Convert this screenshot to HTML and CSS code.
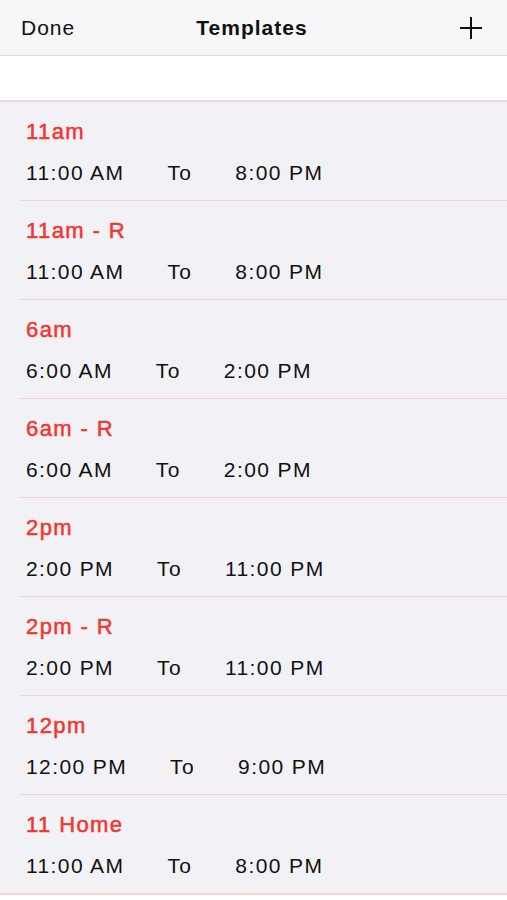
FILE: index.html
```html
<!DOCTYPE html>
<html lang="en">
<head>
  <meta charset="UTF-8" />
  <meta name="viewport" content="width=device-width, initial-scale=1.0" />
  <title>Templates</title>
  <link rel="stylesheet" href="styles.css">
</head>
<body>
  <header class="navbar">
    <span class="nav-left">Done</span>
    <span class="nav-title">Templates</span>
    <span class="nav-right">
      <svg width="24" height="24" viewBox="0 0 24 24">
        <path d="M12 1V23M1 12H23" stroke="#111" stroke-width="2" fill="none" />
      </svg>
    </span>
  </header>

  <div class="spacer"></div>

  <div class="list">
    <div class="row">
      <div class="name">11am</div>
      <div class="times"><span>11:00 AM</span><span>To</span><span>8:00 PM</span></div>
    </div>
    <div class="row">
      <div class="name">11am - R</div>
      <div class="times"><span>11:00 AM</span><span>To</span><span>8:00 PM</span></div>
    </div>
    <div class="row">
      <div class="name">6am</div>
      <div class="times"><span>6:00 AM</span><span>To</span><span>2:00 PM</span></div>
    </div>
    <div class="row">
      <div class="name">6am - R</div>
      <div class="times"><span>6:00 AM</span><span>To</span><span>2:00 PM</span></div>
    </div>
    <div class="row">
      <div class="name">2pm</div>
      <div class="times"><span>2:00 PM</span><span>To</span><span>11:00 PM</span></div>
    </div>
    <div class="row">
      <div class="name">2pm - R</div>
      <div class="times"><span>2:00 PM</span><span>To</span><span>11:00 PM</span></div>
    </div>
    <div class="row">
      <div class="name">12pm</div>
      <div class="times"><span>12:00 PM</span><span>To</span><span>9:00 PM</span></div>
    </div>
    <div class="row last">
      <div class="name">11 Home</div>
      <div class="times"><span>11:00 AM</span><span>To</span><span>8:00 PM</span></div>
    </div>
  </div>
</body>
</html>
```

FILE: styles.css
```css
body {
  margin: 0;
  padding: 0;
  background: #fff;
  color: #111;
  font-family: "Liberation Sans", Arial, sans-serif;
}
.navbar {
  display: flex;
  align-items: center;
  justify-content: space-between;
  height: 55px;
  padding: 0 24px 0 21px;
  background: #f7f7f7;
  border-bottom: 1px solid #dedede;
  font-size: 21px;
  letter-spacing: 1px;
}
.nav-left {
  width: 80px;
}
.nav-title {
  font-weight: bold;
}
.nav-right {
  width: 80px;
  display: flex;
  justify-content: flex-end;
}
.spacer {
  height: 44px;
}
.list {
  background: #f2f1f6;
  border-top: 2px solid #f6d6dd;
}
.row {
  margin-left: 20px;
  padding: 18px 0 14px 6px;
  border-bottom: 1px solid #f4d0d4;
}
.row.last {
  margin-left: 0;
  padding-left: 26px;
  border-bottom: 2px solid #f8d6d6;
}
.name {
  color: #f0362e;
  font-size: 22px;
  letter-spacing: 1.4px;
  line-height: 24px;
  -webkit-text-stroke: 0.5px #f0362e;
}
.times {
  display: flex;
  gap: 43px;
  margin-top: 16px;
  font-size: 21px;
  letter-spacing: 1.4px;
  line-height: 26px;
}
```
